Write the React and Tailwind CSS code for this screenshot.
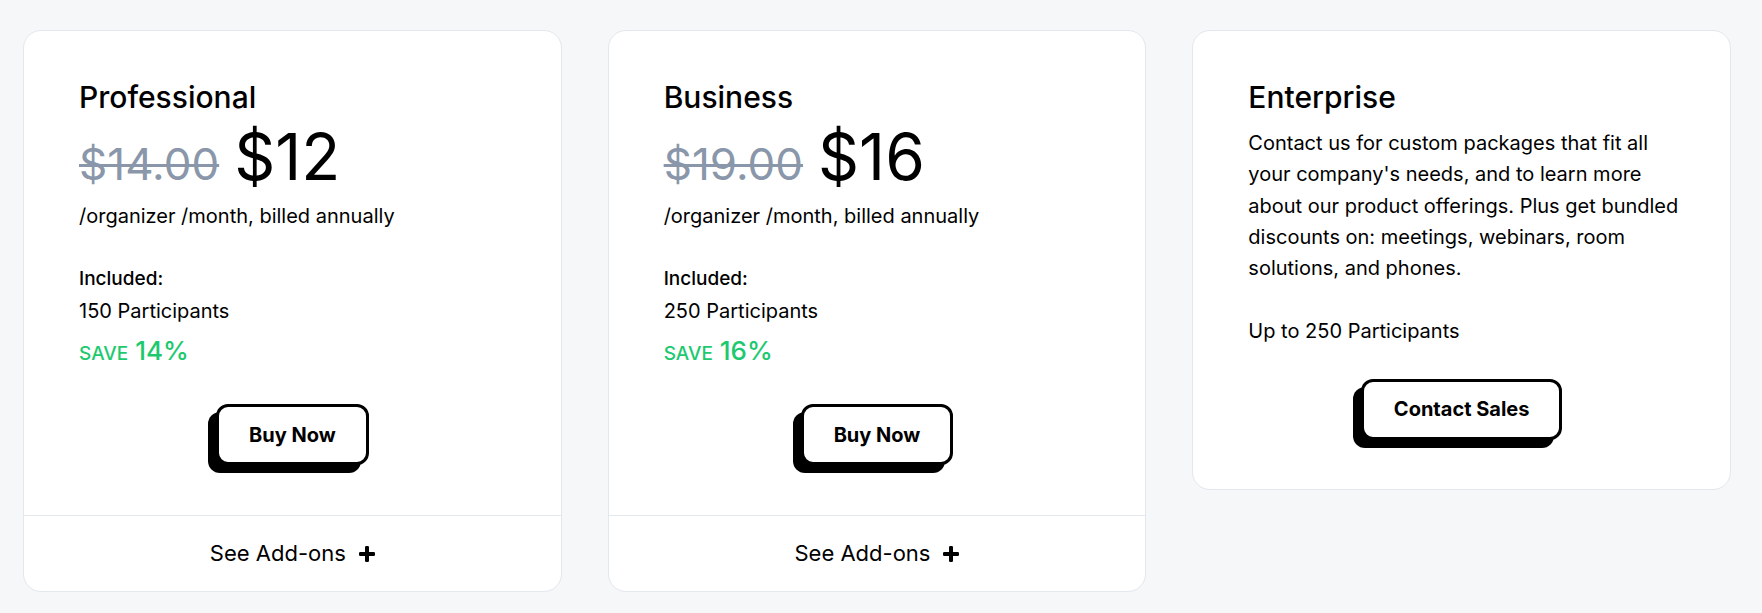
import React from 'react';

const plans = [
  { name: 'Professional', oldPrice: '$14.00', price: '$12', participants: '150 Participants', save: '14%' },
  { name: 'Business', oldPrice: '$19.00', price: '$16', participants: '250 Participants', save: '16%' },
];

const enterpriseLines = [
  'Contact us for custom packages that fit all',
  "your company's needs, and to learn more",
  'about our product offerings. Plus get bundled',
  'discounts on: meetings, webinars, room',
  'solutions, and phones.',
];

const PlusIcon = () => (
  <svg width="16" height="16" viewBox="0 0 16 16" fill="#000">
    <rect x="6" y="0" width="4" height="16" rx="1.2" />
    <rect x="0" y="6" width="16" height="4" rx="1.2" />
  </svg>
);

const ShadowButton = ({ children }) => (
  <button className="inline-flex h-[61px] items-center justify-center rounded-[12px] border-[3px] border-black bg-white px-[30px] text-[20px] font-bold text-black shadow-[-8px_8px_0_0_#000]">
    {children}
  </button>
);

const PlanCard = ({ plan }) => (
  <div className="flex flex-col rounded-[18px] border border-[#e3e7ee] bg-white">
    <div className="px-[55px] pt-12 pb-[50px]">
      <h3 className="text-[30px] leading-[36px] font-medium">{plan.name}</h3>
      <div className="mt-[10px] flex items-baseline">
        <span className="mr-[15px] text-[44px] leading-none text-[#8a97aa] line-through decoration-[3px]">
          {plan.oldPrice}
        </span>
        <span className="text-[64px] leading-none">{plan.price}</span>
      </div>
      <p className="mt-[13px] text-[20px] leading-[28px]">/organizer /month, billed annually</p>
      <p className="mt-[35px] text-[19px] leading-[28px] font-medium">Included:</p>
      <p className="mt-1 text-[20px] leading-[28px]">{plan.participants}</p>
      <p className="mt-[10px] text-[26px] leading-[32px] font-medium text-[#1dc96e]">
        <span className="text-[19px] leading-none">SAVE</span> {plan.save}
      </p>
      <div className="mt-[37px] flex justify-center">
        <ShadowButton>Buy Now</ShadowButton>
      </div>
    </div>
    <div className="flex h-[76px] items-center justify-center gap-[13px] border-t border-[#e3e7ee]">
      <span className="text-[22px]">See Add-ons</span>
      <PlusIcon />
    </div>
  </div>
);

export default function App() {
  return (
    <div
      className="min-h-[613px] bg-[#f5f7f9] pt-[30px] pl-[23px] text-black"
      style={{ fontFamily: 'Inter, "Noto Sans", sans-serif' }}
    >
      <div className="grid w-[1708px] grid-cols-3 items-start gap-[46px]">
        {plans.map((plan) => (
          <PlanCard key={plan.name} plan={plan} />
        ))}
        <div className="rounded-[18px] border border-[#e3e7ee] bg-white px-[55px] pt-12 pb-[49px]">
          <h3 className="text-[30px] leading-[36px] font-medium">Enterprise</h3>
          <p className="mt-[13px] text-[20px] leading-[31.25px] whitespace-nowrap">
            {enterpriseLines.map((line, i) => (
              <React.Fragment key={i}>
                {line}
                {i < enterpriseLines.length - 1 && <br />}
              </React.Fragment>
            ))}
          </p>
          <p className="mt-[31.25px] text-[20px] leading-[31.25px]">Up to 250 Participants</p>
          <div className="mt-8 flex justify-center">
            <ShadowButton>Contact Sales</ShadowButton>
          </div>
        </div>
      </div>
    </div>
  );
}
